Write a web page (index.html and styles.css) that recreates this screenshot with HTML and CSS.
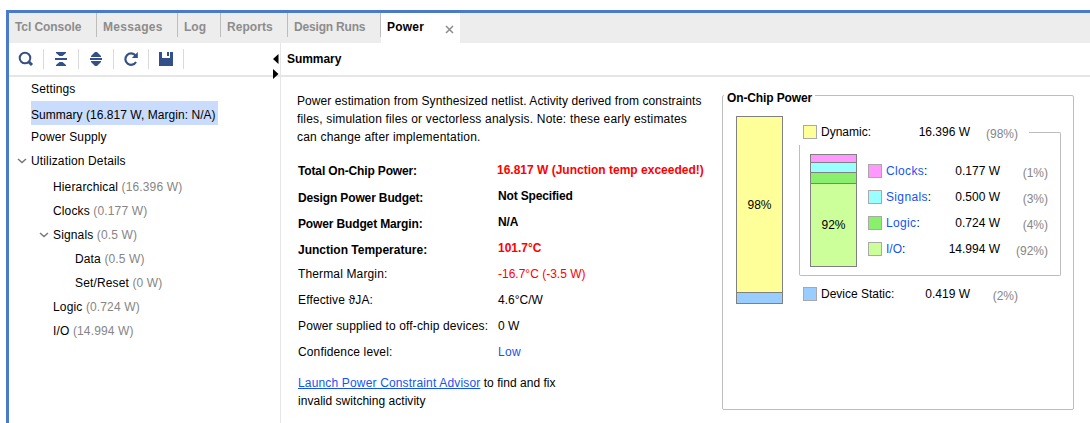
FILE: index.html

```html
<!DOCTYPE html>
<html lang="en">
<head>
<meta charset="utf-8">
<title>Power</title>
<link rel="stylesheet" href="styles.css">
</head>
<body>
<div class="window">
  <nav class="tabs">
    <span class="tab tab-console">Tcl Console</span>
    <span class="tab tab-messages">Messages</span>
    <span class="tab tab-log">Log</span>
    <span class="tab tab-reports">Reports</span>
    <span class="tab tab-runs">Design Runs</span>
    <span class="tab active">Power
      <svg class="close" width="9" height="9" viewBox="0 0 9 9"><path d="M1 1L8 8M8 1L1 8" stroke="#8c8c8c" stroke-width="1.5"/></svg>
    </span>
  </nav>
  <div class="panes">
    <aside class="side">
      <div class="toolbar">
        <span class="tool"><svg width="16" height="16" viewBox="0 0 16 16"><circle cx="7" cy="7" r="5.3" fill="none" stroke="#34508a" stroke-width="2"/><path d="M10.500 10.500L14 14" stroke="#34508a" stroke-width="3"/></svg></span>
        <span class="tool"><svg width="16" height="16" viewBox="0 0 16 16" fill="#34508a"><path d="M3 1H13V2L9.500 5H6.500L3 2ZM2 7H14V9H2ZM3 15H13V14L9.500 11H6.500L3 14Z"/></svg></span>
        <span class="tool"><svg width="16" height="16" viewBox="0 0 16 16" fill="#34508a"><path d="M3 5L7 1H9L13 5V6H3ZM2 7H14V9H2ZM3 10H13V11L9 15H7L3 11Z"/></svg></span>
        <span class="tool"><svg width="16" height="16" viewBox="0 0 16 16"><path d="M12.500 4.500A5.700 5.700 0 1 0 13 11" fill="none" stroke="#34508a" stroke-width="2.200"/><path d="M14.800 1V7H8.800Z" fill="#34508a"/></svg></span>
        <span class="tool"><svg width="16" height="16" viewBox="0 0 16 16" fill="#34508a"><path d="M1 1H4V7H12V1H15V15H1ZM9 1H11V5H9Z"/></svg></span>
      </div>
      <ul class="tree">
        <li class="node">Settings</li>
        <li class="node selected"><span class="highlight">Summary (16.817 W, Margin: N/A)</span></li>
        <li class="node supply">Power Supply</li>
        <li class="node details"><svg class="chevron" width="10" height="6" viewBox="0 0 10 6"><path d="M1 1L5 4.500L9 1" fill="none" stroke="#777" stroke-width="1.5"/></svg>Utilization Details</li>
        <li class="node level1 first">Hierarchical <span class="power">(16.396 W)</span></li>
        <li class="node level1">Clocks <span class="power">(0.177 W)</span></li>
        <li class="node level1"><svg class="chevron" width="10" height="6" viewBox="0 0 10 6"><path d="M1 1L5 4.500L9 1" fill="none" stroke="#777" stroke-width="1.5"/></svg>Signals <span class="power">(0.5 W)</span></li>
        <li class="node level2">Data <span class="power">(0.5 W)</span></li>
        <li class="node level2">Set/Reset <span class="power">(0 W)</span></li>
        <li class="node level1">Logic <span class="power">(0.724 W)</span></li>
        <li class="node level1">I/O <span class="power">(14.994 W)</span></li>
      </ul>
      <svg class="arrows" width="6" height="25" viewBox="0 0 6 25"><path d="M5.500 0V10L0 5ZM0 15V25L5.500 20Z"/></svg>
    </aside>
    <main class="main">
      <h1 class="heading">Summary</h1>
      <div class="content">
        <section class="report">
          <p class="intro"><span class="line1">Power estimation from Synthesized netlist. Activity derived from constraints</span><br><span class="line2">files, simulation files or vectorless analysis. Note: these early estimates</span><br><span class="line3">can change after implementation.</span></p>
          <dl class="facts">
            <dt class="strong total">Total On-Chip Power:</dt><dd class="strong alert total-value">16.817 W (Junction temp exceeded!)</dd>
            <dt class="strong">Design Power Budget:</dt><dd class="strong budget">Not Specified</dd>
            <dt class="strong">Power Budget Margin:</dt><dd class="strong budget">N/A</dd>
            <dt class="strong junction">Junction Temperature:</dt><dd class="strong alert">101.7°C</dd>
            <dt>Thermal Margin:</dt><dd class="alert">-16.7°C (-3.5 W)</dd>
            <dt>Effective ϑJA:</dt><dd>4.6°C/W</dd>
            <dt>Power supplied to off-chip devices:</dt><dd>0 W</dd>
            <dt>Confidence level:</dt><dd class="blue low">Low</dd>
          </dl>
          <p class="advice"><a class="link">Launch Power Constraint Advisor</a> to find and fix<br>invalid switching activity</p>
        </section>
        <section class="chip">
          <h2 class="chip-title"><span class="chip-name">On-Chip Power</span></h2>
          <div class="chip-body">
            <div class="bar bar-total"><div class="part yellow">98%</div><div class="part static"></div></div>
            <div class="breakdown">
              <div class="dynamic"><i class="swatch yellow"></i><span class="name">Dynamic:</span><span class="watts">16.396 W</span><span class="pct">(98%)</span><i class="rule"></i></div>
              <div class="group">
                <div class="bar bar-dynamic"><div class="part clocks"></div><div class="part signals"></div><div class="part logic"></div><div class="part io">92%</div></div>
                <div class="legend">
                  <div class="entry"><i class="swatch clocks"></i><span class="name"><a class="blue">Clocks</a>:</span><span class="watts">0.177 W</span><span class="pct">(1%)</span></div>
                  <div class="entry"><i class="swatch signals"></i><span class="name"><a class="blue">Signals</a>:</span><span class="watts">0.500 W</span><span class="pct">(3%)</span></div>
                  <div class="entry"><i class="swatch logic"></i><span class="name"><a class="blue">Logic</a>:</span><span class="watts">0.724 W</span><span class="pct">(4%)</span></div>
                  <div class="entry"><i class="swatch io"></i><span class="name io-name"><a class="blue">I/O</a>:</span><span class="watts">14.994 W</span><span class="pct">(92%)</span></div>
                </div>
              </div>
              <div class="dynamic device"><i class="swatch static"></i><span class="name">Device Static:</span><span class="watts">0.419 W</span><span class="pct">(2%)</span></div>
            </div>
          </div>
        </section>
      </div>
    </main>
  </div>
</div>
</body>
</html>
```

FILE: styles.css

```css
* { box-sizing: border-box; }
body { margin: 0; padding: 10px 0 0 6px; height: 423px; overflow: hidden; background: #fff; color: #000; font: 12px/18px "Liberation Sans", Arial, sans-serif; }
h1, h2, p, ul, dl, dd { margin: 0; padding: 0; font-size: 12px; }
.window { height: 413px; border-top: 3px solid #4a7bcb; border-left: 3px solid #4a7bcb; display: flex; flex-direction: column; }
.tabs { height: 30px; background: #ededed; display: flex; flex: none; }
.tab { height: 24px; border-right: 1px solid #bdbdbd; padding: 5px 0 0 6px; color: #8c8c8c; font-weight: bold; white-space: nowrap; }
.tab-console { width: 88px; letter-spacing: -.08px; }
.tab-messages { width: 81px; letter-spacing: .3px; }
.tab-log { width: 43px; }
.tab-reports { width: 67px; letter-spacing: .05px; }
.tab-runs { width: 93px; letter-spacing: -.18px; }
.tab.active { width: 79px; height: 30px; background: #fff; color: #000; border: 0; display: flex; letter-spacing: .2px; }
.close { margin: 7px 6px 0 auto; }
.panes { flex: 1; display: flex; min-height: 0; }
.side { width: 272px; border-right: 1px solid #e6e6e6; position: relative; flex: none; }
.toolbar { height: 34px; border-bottom: 2px solid #e6e6e6; display: flex; align-items: center; }
.tool { width: 35px; height: 20px; border-right: 1px solid #dadada; display: flex; align-items: center; justify-content: center; }
.arrows { position: absolute; left: 264px; top: 11px; }
.tree { list-style: none; }
.node { height: 24px; padding-left: 22px; line-height: 24px; display: flex; align-items: center; white-space: pre; letter-spacing: .14px; }
.selected { letter-spacing: .04px; }
.highlight { background: #c9dcfd; height: 24px; width: 187px; padding-top: 2px; }
.supply { height: 23px; }
.details { height: 25px; }
.chevron { margin: 0 4px 0 -14px; }
.level1 { padding-left: 44px; }
.level2 { padding-left: 66px; }
.first { height: 26px; padding-top: 2px; }
.power { color: #868686; }
.main { flex: 1; min-width: 0; }
.heading { height: 34px; border-bottom: 2px solid #e6e6e6; padding: 7px 0 0 6px; letter-spacing: -.05px; }
.content { display: flex; }
.report { width: 441px; padding: 15px 0 0 16px; flex: none; white-space: nowrap; }
.line1 { letter-spacing: .083px; }
.line2 { letter-spacing: .175px; }
.line3 { letter-spacing: .19px; }
.facts { margin: 11px 0 0 1px; display: grid; grid-template-columns: 200px 1fr; grid-auto-rows: 26px; line-height: 26px; }
dt { letter-spacing: .14px; }
.strong { font-weight: bold; }
dt.strong { padding-top: 2px; letter-spacing: -.14px; }
dt.total { padding-top: 1px; }
dt.junction { letter-spacing: 0; }
.total-value { margin-left: -1px; }
.budget { letter-spacing: -.15px; }
.low { letter-spacing: .3px; }
.alert { color: #f00; }
.blue, .link { color: #1453f5; }
.link { text-decoration: underline; letter-spacing: .16px; }
.advice { margin: 9px 0 0 1px; letter-spacing: .03px; }
.chip { width: 352px; height: 315px; margin-top: 18px; border: 1px solid #bdbdbd; border-radius: 2px; }
.chip-title { height: 6px; line-height: 18px; margin-left: 1px; }
.chip-name { display: block; width: 91px; height: 18px; padding-left: 3px; background: #fff; transform: translateY(-7px); letter-spacing: -.12px; }
.chip-body { display: flex; padding: 14px 0 0 13px; }
.bar { width: 47px; border: 1px solid #808080; text-align: center; display: flex; flex-direction: column; }
.part { display: flex; align-items: center; justify-content: center; }
.part + .part { border-top: 1px solid #808080; }
.bar-total { height: 188px; }
.bar-total .yellow { height: 175px; }
.bar-total .static { flex: 1; }
.yellow { background: #ff9; }
.static { background: #9cf; }
.clocks { background: #f9f; }
.signals { background: #9ff; }
.logic { background: #8aef6c; }
.io { background: #cf9; }
.breakdown { width: 262px; margin: 3px 0 0 16px; }
.dynamic, .entry { display: flex; align-items: center; height: 26px; white-space: nowrap; }
.dynamic { padding-left: 4px; }
.swatch { width: 14px; height: 14px; border: 1px solid #a9a9a9; flex: none; }
.name { width: 78px; margin-left: 4px; }
.watts { width: 71px; text-align: right; }
.pct { width: 48px; padding-top: 3px; text-align: right; color: #868686; }
.rule { margin: 13px 0 0 auto; width: 32px; height: 13px; border: solid #bdbdbd; border-width: 1px 1px 0 0; border-radius: 0 2px 0 0; }
.group { height: 131px; border: solid #bdbdbd; border-width: 0 1px 1px; border-radius: 0 0 2px 2px; display: flex; padding: 9px 0 0 10px; }
.bar-dynamic { height: 113px; }
.bar-dynamic .clocks { height: 7px; }
.bar-dynamic .signals { height: 10px; }
.bar-dynamic .logic { height: 11px; }
.bar-dynamic .io { flex: 1; }
.legend { margin: 4px 0 0 11px; }
.entry .name { width: 60px; letter-spacing: .35px; }
.entry .io-name { letter-spacing: 0; }
.entry .watts { width: 54px; }
.device { margin-top: 5px; }
```
